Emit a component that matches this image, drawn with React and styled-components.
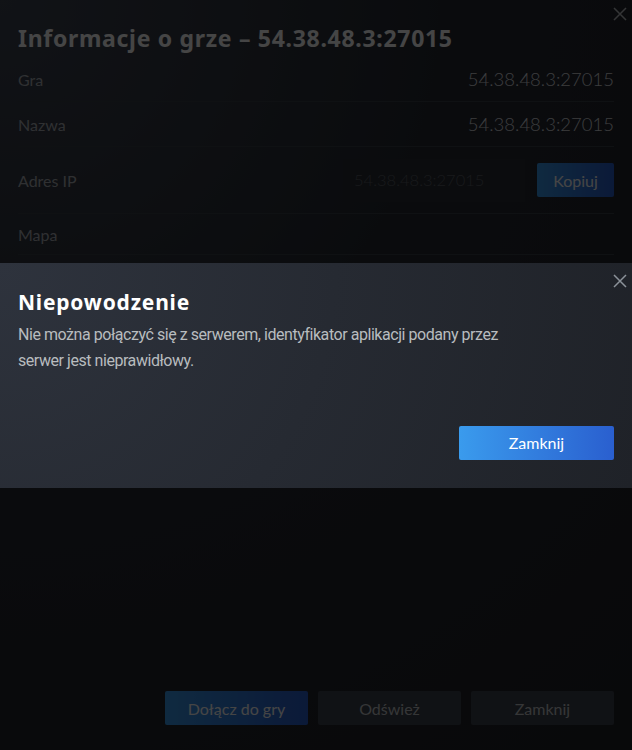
import React from "react"
import styled, { createGlobalStyle } from "styled-components"

const GlobalStyle = createGlobalStyle`
  html, body {
    margin: 0;
    padding: 0;
    background: #08090b;
  }
  * {
    box-sizing: border-box;
  }
`

const FONT = `Lato, "Noto Sans", Arial, sans-serif`
const HEAD_FONT = `"Noto Sans", "Open Sans", Arial, sans-serif`
const BODY_FONT = `Roboto, "Noto Sans", Arial, sans-serif`

const Page = styled.div`
  position: relative;
  width: 632px;
  height: 750px;
  overflow: hidden;
  font-family: ${FONT};
`

const Dialog = styled.div`
  display: flex;
  flex-direction: column;
  height: 100%;
  padding: 0 18px;
  background: radial-gradient(circle at 0% 0%, #3f4654 0%, #272b33 45%, #1f2127 100%);
`

const CloseX = styled.button`
  position: absolute;
  top: ${p => p.$top}px;
  right: 2px;
  width: 20px;
  height: 20px;
  padding: 0;
  border: none;
  background: none;
  color: ${p => p.$color};
  display: flex;
  align-items: center;
  justify-content: center;
`

const DialogTitle = styled.h1`
  margin: 22px 0 3px;
  font-family: ${HEAD_FONT};
  font-size: 23px;
  font-weight: 700;
  letter-spacing: 0.7px;
  color: #ffffff;
  line-height: 32px;
`

const InfoRow = styled.div`
  display: flex;
  align-items: center;
  justify-content: space-between;
  height: ${p => p.$height}px;
  border-bottom: 1px solid #3a3f48;
`

const Label = styled.span`
  font-size: 16px;
  color: #aeb3ba;
`

const Value = styled.span`
  font-size: 18.5px;
  font-weight: 300;
  color: #dcdee0;
`

const IpGroup = styled.div`
  display: flex;
  align-items: center;
  gap: 12px;
`

const IpField = styled.div`
  width: 182px;
  height: 43px;
  display: flex;
  align-items: center;
  padding-left: 11px;
  background: #2a2e35;
  font-size: 16.5px;
  font-weight: 300;
  color: #5a5f66;
`

const Spacer = styled.div`
  flex: 1;
`

const Footer = styled.div`
  display: flex;
  justify-content: flex-end;
  gap: 10px;
  padding-bottom: 25px;
`

const Button = styled.button`
  width: ${p => p.$width}px;
  height: ${p => p.$height}px;
  border: none;
  border-radius: 2px;
  font-family: ${FONT};
  font-size: 16px;
  color: ${p => (p.$primary ? "#ffffff" : "#c5c8cc")};
  background: ${p =>
    p.$primary
      ? "linear-gradient(90deg, #3a9bed 0%, #2a5fcf 100%)"
      : "#3d434d"};
`

const Overlay = styled.div`
  position: absolute;
  inset: 0;
  background: rgba(0, 0, 0, 0.73);
  display: flex;
  align-items: center;
`

const Modal = styled.div`
  position: relative;
  width: 100%;
  height: 225px;
  display: flex;
  flex-direction: column;
  padding: 24px 18px 28px;
  background: radial-gradient(circle at 0% 0%, #2e333d 0%, #262a32 50%, #1f2228 100%);
`

const ModalTitle = styled.h2`
  margin: 0 0 5px;
  font-family: ${HEAD_FONT};
  font-size: 21px;
  font-weight: 700;
  letter-spacing: 0.8px;
  line-height: 30px;
  color: #ffffff;
`

const ModalText = styled.p`
  margin: 0;
  max-width: 520px;
  font-family: ${BODY_FONT};
  font-size: 16px;
  letter-spacing: -0.45px;
  line-height: 26px;
  color: #b8bcbf;
`

const ModalActions = styled.div`
  display: flex;
  justify-content: flex-end;
  margin-top: auto;
`

const XIcon = ({ size = 14 }) => (
  <svg width={size} height={size} viewBox="0 0 14 14">
    <path d="M1 1L13 13M13 1L1 13" stroke="currentColor" strokeWidth="1.5" />
  </svg>
)

const rows = [
  { label: "Gra", value: "54.38.48.3:27015", height: 45 },
  { label: "Nazwa", value: "54.38.48.3:27015", height: 45 },
]

export default function App() {
  return (
    <>
      <GlobalStyle />
      <Page>
        <Dialog>
          <CloseX $top={4} $color="#c0c4c8">
            <XIcon />
          </CloseX>
          <DialogTitle>Informacje o grze – 54.38.48.3:27015</DialogTitle>
          {rows.map(r => (
            <InfoRow key={r.label} $height={r.height}>
              <Label>{r.label}</Label>
              <Value>{r.value}</Value>
            </InfoRow>
          ))}
          <InfoRow $height={67}>
            <Label>Adres IP</Label>
            <IpGroup>
              <IpField>54.38.48.3:27015</IpField>
              <Button $primary $width={77} $height={34}>Kopiuj</Button>
            </IpGroup>
          </InfoRow>
          <InfoRow $height={41}>
            <Label>Mapa</Label>
          </InfoRow>
          <Spacer />
          <Footer>
            <Button $primary $width={143} $height={34}>Dołącz do gry</Button>
            <Button $width={143} $height={34}>Odśwież</Button>
            <Button $width={143} $height={34}>Zamknij</Button>
          </Footer>
        </Dialog>
        <Overlay>
          <Modal>
            <CloseX $top={8} $color="#8b9299">
              <XIcon />
            </CloseX>
            <ModalTitle>Niepowodzenie</ModalTitle>
            <ModalText>
              Nie można połączyć się z serwerem, identyfikator aplikacji podany przez serwer jest nieprawidłowy.
            </ModalText>
            <ModalActions>
              <Button $primary $width={155} $height={34}>Zamknij</Button>
            </ModalActions>
          </Modal>
        </Overlay>
      </Page>
    </>
  )
}
